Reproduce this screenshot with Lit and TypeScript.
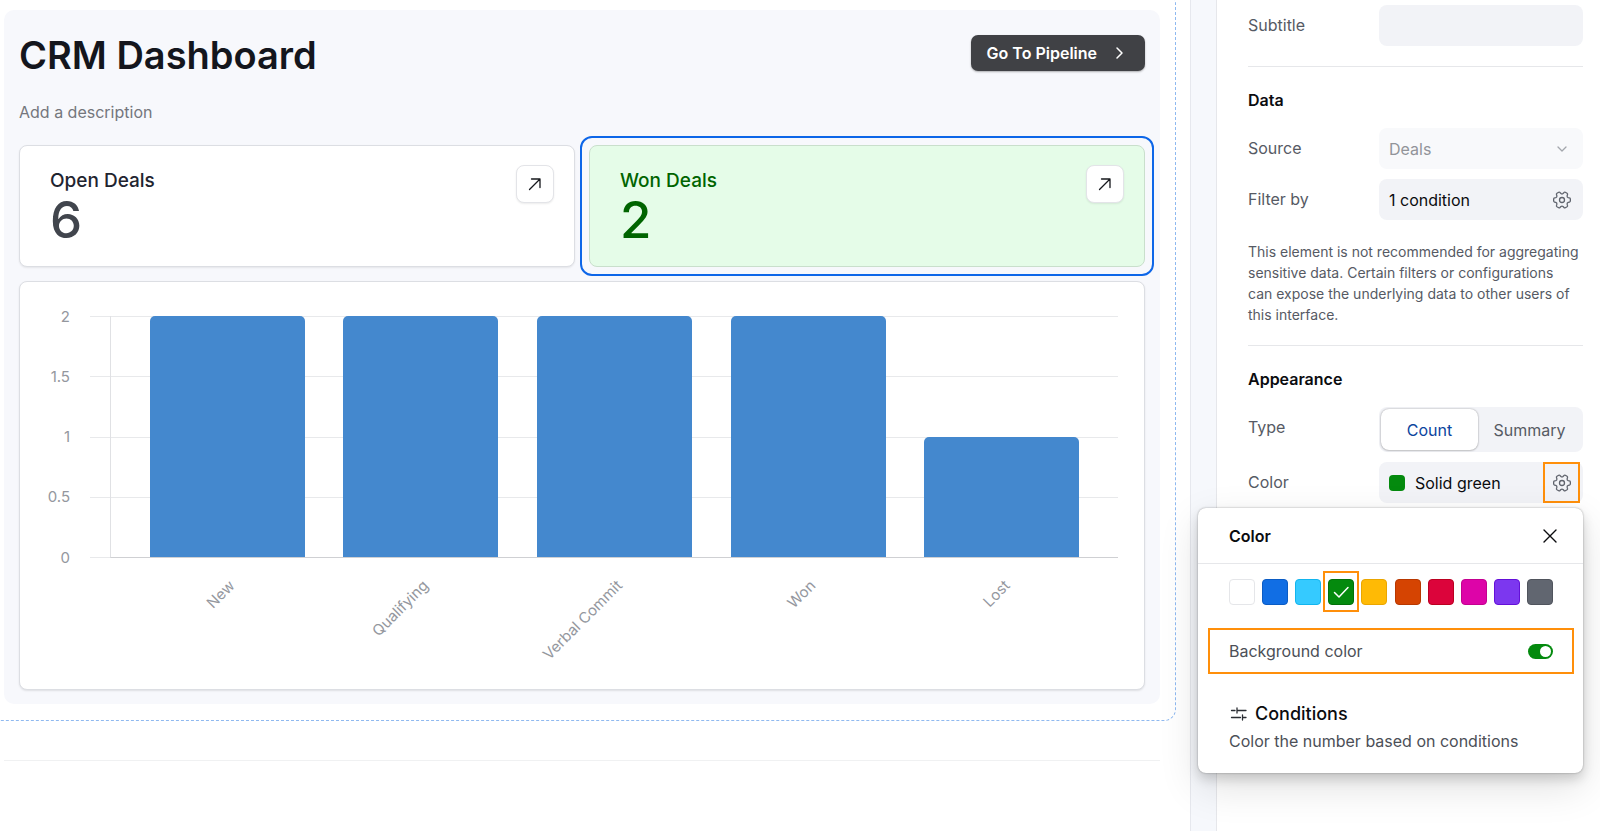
import { LitElement, html, css, nothing } from "lit";
import { customElement, property, state } from "lit/decorators.js";
import { styleMap } from "lit/directives/style-map.js";
import { classMap } from "lit/directives/class-map.js";

const FONT = css`Inter, "Liberation Sans", sans-serif`;

const arrowIcon = html`<svg width="16" height="16" viewBox="0 0 16 16" fill="none" stroke="#16181d" stroke-width="1.3" stroke-linecap="round" stroke-linejoin="round" aria-hidden="true"><path d="M2.5 13.5 13 3M4.5 3H13v8.5" /></svg>`;

/** Six-toothed gear outline, with one tooth on each side and a notch on top. */
function gearPath(): string {
  const at = (degrees: number, radius: number) => {
    const angle = (degrees * Math.PI) / 180;
    return `${(9 + radius * Math.cos(angle)).toFixed(2)} ${(9 + radius * Math.sin(angle)).toFixed(2)}`;
  };
  let path = `M${at(-21, 6.6)}`;
  for (let i = 0; i < 6; i++) {
    const a = i * 60;
    path += `L${at(a - 15, 7.8)}Q${at(a - 13, 8.5)} ${at(a - 7, 8.4)}L${at(a + 7, 8.4)}Q${at(a + 13, 8.5)} ${at(a + 15, 7.8)}L${at(a + 21, 6.6)}Q${at(a + 30, 5.6)} ${at(a + 39, 6.6)}`;
  }
  return `${path}Z`;
}

const gearIcon = html`<svg width="18" height="18" viewBox="0 0 18 18" fill="none" stroke="#5f636d" stroke-width="1.3" stroke-linejoin="round" aria-hidden="true"><path d=${gearPath()} /><circle cx="9" cy="9" r="2.5" /></svg>`;

@customElement("metric-card")
export class MetricCard extends LitElement {
  @property() label = "";
  @property() value = "";
  @property({ type: Boolean, reflect: true }) selected = false;

  static styles = css`
    :host { display: block; font-family: ${FONT}; }
    .card {
      position: relative;
      box-sizing: border-box;
      display: flex;
      justify-content: space-between;
      align-items: flex-start;
      height: 100%;
      padding: 19px 20px 19px 30px;
      border: 1px solid #dcdee3;
      border-radius: 8px;
      background: #fff;
      box-shadow: 0 1px 2px rgba(0, 0, 0, 0.08);
    }
    .text { padding-top: 4px; }
    .label { margin: 0; font-size: 19px; line-height: 24px; font-weight: 500; color: #1f2530; }
    .value { margin: 0; font-size: 51px; line-height: 54px; font-weight: 500; color: #41454d; }
    .open {
      box-sizing: border-box;
      display: grid;
      place-items: center;
      width: 38px;
      height: 38px;
      margin: 0;
      padding: 0;
      border: 1px solid #e3e4e8;
      border-radius: 8px;
      background: #fff;
      box-shadow: 0 1px 2px rgba(0, 0, 0, 0.08);
    }
    :host([selected]) .card { border-color: #c9dfcc; background: #e5fce8; box-shadow: none; }
    :host([selected]) .card::after {
      content: "";
      position: absolute;
      inset: -10px;
      border: 2px solid #0d66e8;
      border-radius: 12px;
      pointer-events: none;
    }
    :host([selected]) .label, :host([selected]) .value { color: #006400; }
  `;

  render() {
    return html`<article class="card">
      <div class="text">
        <h2 class="label">${this.label}</h2>
        <p class="value">${this.value}</p>
      </div>
      <button class="open" type="button" aria-label="Open ${this.label}">${arrowIcon}</button>
    </article>`;
  }
}

@customElement("stage-chart")
export class StageChart extends LitElement {
  @state() private bars = [
    { name: "New", count: 2 },
    { name: "Qualifying", count: 2 },
    { name: "Verbal Commit", count: 2 },
    { name: "Won", count: 2 },
    { name: "Lost", count: 1 },
  ];
  private ticks = [2, 1.5, 1, 0.5, 0];

  static styles = css`
    :host { display: block; font-family: ${FONT}; font-size: 15px; color: #94979e; }
    .card {
      display: grid;
      grid-template-columns: 50px minmax(0, 1fr);
      column-gap: 20px;
      margin: 0;
      padding: 34px 26px 0 0;
      border: 1px solid #dcdee3;
      border-radius: 8px;
      background: #fff;
      box-shadow: 0 1px 2px rgba(0, 0, 0, 0.1);
    }
    .scale { display: flex; flex-direction: column; justify-content: space-between; height: 242px; text-align: right; }
    .tick { display: flex; align-items: center; justify-content: flex-end; height: 1px; line-height: 20px; }
    .plot { display: grid; height: 242px; }
    .grid { grid-area: 1 / 1; display: flex; flex-direction: column; justify-content: space-between; }
    .rule { height: 1px; background: #e8e9eb; }
    .bars {
      grid-area: 1 / 1;
      display: flex;
      align-items: flex-end;
      justify-content: space-evenly;
      margin-left: 20px;
      border-left: 1px solid #e0e1e4;
      border-bottom: 1px solid #cfd0d3;
    }
    .bar { width: 15.4%; border-radius: 5px 5px 0 0; background: #4488ce; }
    .names { grid-column: 2; display: flex; justify-content: space-evenly; height: 131px; margin-left: 21px; }
    .slot { display: flex; justify-content: flex-end; width: 15.4%; padding-top: 15px; }
    .slot::after { content: ""; flex: 0 0 calc(50% - 5px); }
    .name { flex: none; height: 20px; line-height: 20px; white-space: nowrap; transform: rotate(-45deg); transform-origin: right center; }
  `;

  render() {
    return html`<figure class="card">
      <div class="scale">${this.ticks.map((t) => html`<span class="tick">${t}</span>`)}</div>
      <div class="plot">
        <div class="grid">${this.ticks.map(() => html`<span class="rule"></span>`)}</div>
        <div class="bars">
          ${this.bars.map((b) => html`<div class="bar" style=${styleMap({ height: `${(b.count / 2) * 100}%` })}></div>`)}
        </div>
      </div>
      <div class="names">${this.bars.map((b) => html`<div class="slot"><span class="name">${b.name}</span></div>`)}</div>
    </figure>`;
  }
}

@customElement("color-popover")
export class ColorPopover extends LitElement {
  @state() private picked = "Green";
  private colors = [
    { name: "White", fill: "#ffffff", edge: "#e5e6e9" },
    { name: "Blue", fill: "#116ee4", edge: "#0b5cc4" },
    { name: "Cyan", fill: "#35caff", edge: "#12b5ee" },
    { name: "Green", fill: "#048a0e", edge: "#037009" },
    { name: "Yellow", fill: "#ffba05", edge: "#eaa600" },
    { name: "Orange", fill: "#d54402", edge: "#b83800" },
    { name: "Red", fill: "#dc043b", edge: "#bb0020" },
    { name: "Pink", fill: "#dd04a8", edge: "#c40090" },
    { name: "Purple", fill: "#7c37ef", edge: "#6410d8" },
    { name: "Gray", fill: "#616670", edge: "#50545d" },
  ];

  static styles = css`
    :host {
      display: block;
      border-radius: 8px;
      background: #fff;
      box-shadow: 0 0 2px rgba(0, 0, 0, 0.35), 0 6px 12px rgba(0, 0, 0, 0.16), 0 14px 40px rgba(0, 0, 0, 0.12);
      font-family: ${FONT};
      font-size: 16px;
      line-height: 20px;
      color: #4c4f57;
    }
    .head { display: flex; align-items: center; justify-content: space-between; height: 55px; padding: 0 25px 0 31px; border-bottom: 1px solid #e6e7ea; }
    .title { margin: 0; font-size: 16px; font-weight: 600; color: #0b0c0f; }
    .close { display: grid; place-items: center; padding: 0; border: 0; background: none; }
    .swatches { display: flex; justify-content: space-between; margin: 0; padding: 15px 30px 0 31px; border: 0; }
    .swatch { position: relative; display: block; height: 26px; }
    .dot { appearance: none; box-sizing: border-box; display: block; width: 26px; height: 26px; margin: 0; border: 1px solid; border-radius: 4px; }
    .check { position: absolute; inset: 0; pointer-events: none; }
    .marked::after { content: ""; position: absolute; inset: -8px -5px -7px; border: 2px solid #ff8f0a; pointer-events: none; }
    .toggle-row { display: flex; align-items: center; justify-content: space-between; height: 42px; margin: 23px 9px 0 10px; padding: 0 19px; border: 2px solid #ff8f0a; }
    .toggle { appearance: none; width: 25px; height: 15px; margin: 0; border-radius: 8px; background: #048a0e; display: flex; align-items: center; justify-content: flex-end; padding: 2px; box-sizing: border-box; }
    .toggle::before { content: ""; width: 11px; height: 11px; border-radius: 50%; background: #fff; }
    .toggle:not(:checked) { justify-content: flex-start; background: #a5a8ae; }
    .conditions { padding: 28px 31px 22px; }
    .heading { display: flex; align-items: center; gap: 6px; margin: 0 0 5px; font-size: 18px; line-height: 24px; font-weight: 500; color: #0b0c0f; }
    .note { margin: 0; }
  `;

  render() {
    return html`
      <header class="head">
        <h3 class="title">Color</h3>
        <button class="close" type="button" aria-label="Close">
          <svg width="16" height="16" viewBox="0 0 16 16" fill="none" stroke="#0b0c0f" stroke-width="1.4" stroke-linecap="round" aria-hidden="true"><path d="m2 2 12 12M14 2 2 14" /></svg>
        </button>
      </header>
      <fieldset class="swatches" aria-label="Color">
        ${this.colors.map((c) => {
          const on = c.name === this.picked;
          return html`<label class=${classMap({ swatch: true, marked: on })}>
            <input class="dot" type="radio" name="color" aria-label=${c.name} .checked=${on}
              style=${styleMap({ backgroundColor: c.fill, borderColor: c.edge })}
              @change=${() => (this.picked = c.name)} />
            ${on ? html`<svg class="check" width="26" height="26" viewBox="0 0 26 26" fill="none" stroke="#fff" stroke-width="1.5" stroke-linecap="round" stroke-linejoin="round" aria-hidden="true"><path d="m6.5 13.5 4.5 4.5 9-9.5" /></svg>` : nothing}
          </label>`;
        })}
      </fieldset>
      <div class="toggle-row">
        <label for="background">Background color</label>
        <input class="toggle" id="background" type="checkbox" role="switch" checked />
      </div>
      <section class="conditions">
        <h4 class="heading">
          <svg width="20" height="16" viewBox="0 0 20 16" fill="none" stroke="#2a2d33" stroke-width="1.3" stroke-linecap="round" aria-hidden="true"><path d="M2.5 4.5h3.5M8 4.5h9M8 2v5M2.5 11.5h9M13.5 9v5M13.5 11.5h3.5" /></svg>
          Conditions
        </h4>
        <p class="note">Color the number based on conditions</p>
      </section>
    `;
  }
}

@customElement("app-root")
export class AppRoot extends LitElement {
  @state() private type = "Count";

  static styles = css`
    :host {
      display: grid;
      grid-template-columns: minmax(0, 1fr) 26px 384px;
      min-height: 100vh;
      overflow: hidden;
      background: #fff;
      font-family: ${FONT};
      font-size: 16px;
      line-height: 20px;
      color: #565a64;
    }
    .workspace { min-width: 0; }
    .frame { margin: -8px 14px 0 -12px; padding: 17px 15px 16px; border: 1px dashed #8fb9f0; border-radius: 12px; }
    .board { padding: 25px 15px 14px; border-radius: 10px; background: #f7f8fc; }
    .top { display: flex; align-items: flex-start; justify-content: space-between; }
    .title { margin: 0; font-size: 38px; line-height: 40px; font-weight: 600; color: #14161d; }
    .go {
      display: flex;
      align-items: center;
      gap: 14px;
      height: 36px;
      padding: 0 16px;
      border: 0;
      border-radius: 7px;
      background: #404145;
      box-shadow: 0 1px 2px rgba(0, 0, 0, 0.3);
      font: 600 16px/20px ${FONT};
      color: #fff;
    }
    .description { margin: 27px 0 23px; color: #74767c; }
    .cards { display: grid; grid-template-columns: 1fr 1fr; gap: 14px; }
    .wide { grid-column: 1 / -1; }
    .rule { margin: 39px 30px 0 4px; border: 0; border-top: 1px solid #f0f1f2; }
    .gutter { border-left: 1px solid #e6e8ee; background: #f6f8fc; }
    .sidebar { padding: 5px 17px 20px 31px; border-left: 1px solid #e6e7eb; }
    .row { display: grid; grid-template-columns: 131px minmax(0, 1fr); align-items: start; }
    .row + .row { margin-top: 10px; }
    .label { line-height: 41px; }
    .split { margin: 20px 0 21px; border: 0; border-top: 1px solid #e6e7ea; }
    .section { margin: 0 0 16px; font-size: 16px; line-height: 24px; font-weight: 600; color: #0b0c0f; }
    .field {
      box-sizing: border-box;
      width: 100%;
      height: 41px;
      padding: 0 10px;
      border: 0;
      border-radius: 8px;
      background: #f2f3f7;
      font: 400 16px/20px ${FONT};
      color: #0b0c0f;
    }
    .picker { display: grid; align-items: center; }
    .picker > * { grid-area: 1 / 1; }
    .select { appearance: none; background: #f8f9fb; color: #919499; opacity: 1; }
    .chevron { justify-self: end; margin-right: 15px; pointer-events: none; }
    .value { display: flex; align-items: center; padding-right: 3px; }
    .chip { width: 16px; height: 16px; margin-right: 10px; border-radius: 4px; background: #048a0e; }
    .gear { box-sizing: border-box; display: grid; place-items: center; width: 37px; height: 41px; margin-left: auto; padding: 0; border: 2px solid transparent; background: none; }
    .gear.marked { border-color: #ff8f0a; }
    .note { margin: 21px 0 0; padding-right: 3px; font-size: 14px; line-height: 21px; }
    .segments { box-sizing: border-box; display: grid; grid-template-columns: 97px minmax(0, 1fr); height: 45px; padding: 2px; border-radius: 8px; background: #f2f3f7; }
    .segment { padding: 0; border: 0; border-radius: 8px; background: none; font: 400 16px/20px ${FONT}; color: #565a64; }
    .segment.on { background: #fff; box-shadow: 0 0 2px rgba(0, 0, 0, 0.35), 0 1px 2px rgba(0, 0, 0, 0.12); color: #0c449e; }
    .anchor { position: relative; }
    .popover { position: absolute; z-index: 1; top: calc(100% + 5px); right: 0; width: 385px; }
  `;

  render() {
    return html`
      <main class="workspace">
        <div class="frame">
          <section class="board">
            <header class="top">
              <h1 class="title">CRM Dashboard</h1>
              <button class="go" type="button">Go To Pipeline
                <svg width="18" height="16" viewBox="0 0 18 16" fill="none" stroke="#fff" stroke-width="1.5" stroke-linecap="round" stroke-linejoin="round" aria-hidden="true"><path d="m6 3 5 5-5 5" /></svg>
              </button>
            </header>
            <p class="description">Add a description</p>
            <div class="cards">
              <metric-card label="Open Deals" value="6"></metric-card>
              <metric-card label="Won Deals" value="2" selected></metric-card>
              <stage-chart class="wide"></stage-chart>
            </div>
          </section>
        </div>
        <hr class="rule" />
      </main>
      <div class="gutter"></div>
      <aside class="sidebar">
        <div class="row">
          <label class="label" for="subtitle">Subtitle</label>
          <input class="field" id="subtitle" type="text" />
        </div>
        <hr class="split" />
        <h2 class="section">Data</h2>
        <div class="row">
          <label class="label" for="source">Source</label>
          <div class="picker">
            <select class="field select" id="source" disabled><option>Deals</option></select>
            <svg class="chevron" width="12" height="12" viewBox="0 0 12 12" fill="none" stroke="#a3a6ac" stroke-width="1.3" stroke-linecap="round" stroke-linejoin="round" aria-hidden="true"><path d="m2 4 4 4 4-4" /></svg>
          </div>
        </div>
        <div class="row">
          <span class="label">Filter by</span>
          <div class="field value">1 condition<button class="gear" type="button" aria-label="Edit filter">${gearIcon}</button></div>
        </div>
        <p class="note">This element is not recommended for aggregating sensitive data. Certain filters or configurations can expose the underlying data to other users of this interface.</p>
        <hr class="split" />
        <h2 class="section">Appearance</h2>
        <div class="row">
          <span class="label">Type</span>
          <div class="segments" role="group" aria-label="Type">
            ${["Count", "Summary"].map((t) => html`<button type="button" class=${classMap({ segment: true, on: t === this.type })} aria-pressed=${t === this.type ? "true" : "false"} @click=${() => (this.type = t)}>${t}</button>`)}
          </div>
        </div>
        <div class="row anchor">
          <span class="label">Color</span>
          <div class="field value"><span class="chip"></span>Solid green<button class="gear marked" type="button" aria-label="Edit color">${gearIcon}</button></div>
          <color-popover class="popover"></color-popover>
        </div>
      </aside>
    `;
  }
}
